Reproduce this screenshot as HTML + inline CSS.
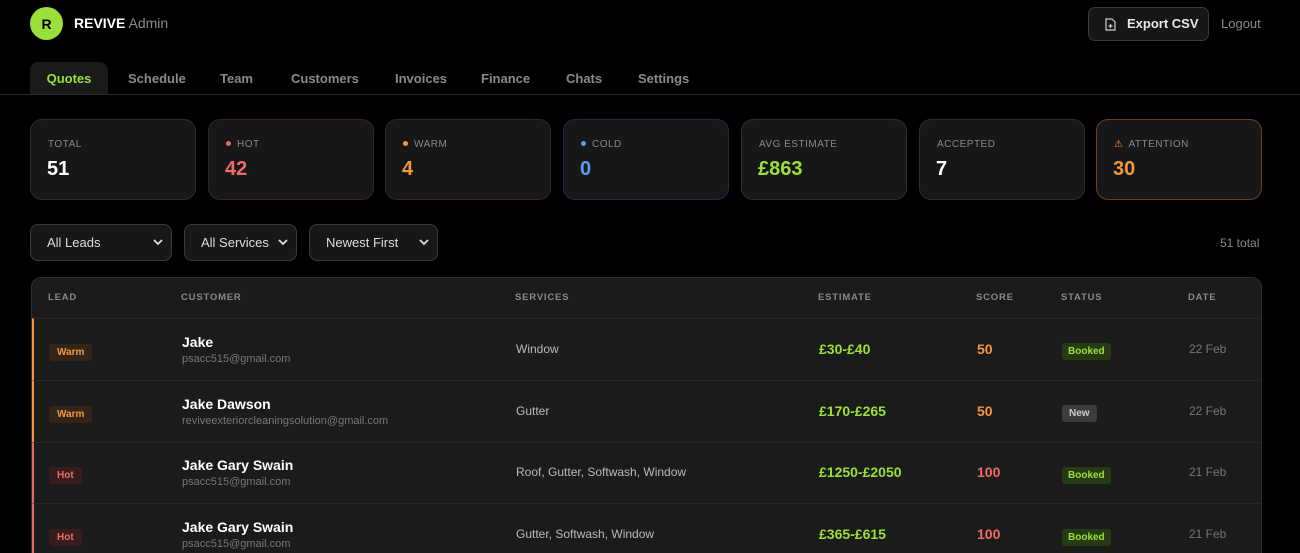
<!DOCTYPE html><html><head><style>
*{box-sizing:border-box;margin:0;padding:0}
html,body{width:1300px;height:553px;overflow:hidden}
body{background:#000;font-family:"Liberation Sans",sans-serif;color:#fff;position:relative}
.abs{position:absolute}
.logo{left:30px;top:7px;width:33px;height:33px;border-radius:50%;background:#9be03a;color:#000;font-weight:bold;font-size:14px;display:flex;align-items:center;justify-content:center}
.tab{top:62px;height:33px;font-size:13px;font-weight:bold;color:#8a8a8a;line-height:33px}
.card{top:119px;width:166px;height:81px;border-radius:12px;background:#171717;border:1px solid #2c2c2c}
.card .l{position:absolute;left:17px;top:19px;font-size:10px;letter-spacing:.5px;color:#8a8a8a}
.card .v{position:absolute;left:16px;top:38px;font-size:20px;font-weight:bold}
.dot{display:inline-block;width:5px;height:5px;border-radius:50%;margin-right:6px;vertical-align:1px}
.sel{top:224px;height:37px;border:1px solid #3a3a3a;border-radius:8px;background:#171717;font-size:13px;color:#ddd;line-height:35px;padding-left:16px}
.sel svg{position:absolute;right:8px;top:14px}
.tbl{left:31px;top:277px;width:1231px;height:320px;border:1px solid #2c2c2c;border-radius:10px;background:#1b1b1b;overflow:hidden}
.th{top:0;height:40px;line-height:40px;font-size:9.5px;font-weight:bold;letter-spacing:.8px;color:#8a8a8a}
.row{left:0;width:1231px;height:62px;border-top:1px solid #262626}
.row>div{position:absolute}
.b{font-size:10px;font-weight:bold;padding:3px 8px;border-radius:3px;display:inline-block}
</style></head><body>
<div class="abs logo">R</div>
<div class="abs" style="left:74px;top:15px;font-size:14px"><b>REVIVE</b> <span style="color:#8a8a8a">Admin</span></div>
<div class="abs" style="left:1088px;top:7px;width:121px;height:34px;border:1px solid #3a3a3a;border-radius:7px;background:#161616;font-size:13px;font-weight:bold;line-height:32px;padding-left:38px;color:#e8e8e8">Export CSV
<svg style="position:absolute;left:16px;top:10px" width="11" height="13" viewBox="0 0 11 13" fill="none" stroke="#ccc" stroke-width="1.2"><path d="M1 1h6l3 3v8H1z"/><path d="M5.5 6v4M3.5 8h4"/></svg></div>
<div class="abs" style="left:1221px;top:16px;font-size:13px;color:#8a8a8a">Logout</div>
<div class="abs tab" style="left:30px;width:78px;background:#1a1a1a;border-radius:8px 8px 0 0;color:#9be03a;text-align:center">Quotes</div>
<div class="abs tab" style="left:128px">Schedule</div>
<div class="abs tab" style="left:220px">Team</div>
<div class="abs tab" style="left:291px">Customers</div>
<div class="abs tab" style="left:395px">Invoices</div>
<div class="abs tab" style="left:481px">Finance</div>
<div class="abs tab" style="left:566px">Chats</div>
<div class="abs tab" style="left:638px">Settings</div>
<div class="abs" style="left:0;top:94px;width:1300px;height:1px;background:#2a2a2a"></div>

<div class="abs card" style="left:30px"><div class="l">TOTAL</div><div class="v">51</div></div>
<div class="abs card" style="left:208px;border-color:#3a2220"><div class="l"><span class="dot" style="background:#e06a6a"></span>HOT</div><div class="v" style="color:#f06a6a">42</div></div>
<div class="abs card" style="left:385px;border-color:#35251c"><div class="l"><span class="dot" style="background:#f59a3c"></span>WARM</div><div class="v" style="color:#f5963a">4</div></div>
<div class="abs card" style="left:563px;border-color:#1e2a48"><div class="l"><span class="dot" style="background:#5b9cf0"></span>COLD</div><div class="v" style="color:#5b9cf0">0</div></div>
<div class="abs card" style="left:741px"><div class="l">AVG ESTIMATE</div><div class="v" style="color:#9be03a">£863</div></div>
<div class="abs card" style="left:919px"><div class="l">ACCEPTED</div><div class="v">7</div></div>
<div class="abs card" style="left:1096px;border-color:#6a4020"><div class="l"><span style="color:#f5963a;margin-right:5px">⚠</span>ATTENTION</div><div class="v" style="color:#f5963a">30</div></div>

<div class="abs sel" style="left:30px;width:142px">All Leads<svg width="10" height="7" viewBox="0 0 10 7"><path d="M1 1l4 4 4-4" stroke="#ddd" stroke-width="1.8" fill="none"/></svg></div>
<div class="abs sel" style="left:184px;width:113px">All Services<svg width="10" height="7" viewBox="0 0 10 7"><path d="M1 1l4 4 4-4" stroke="#ddd" stroke-width="1.8" fill="none"/></svg></div>
<div class="abs sel" style="left:309px;width:129px">Newest First<svg width="10" height="7" viewBox="0 0 10 7"><path d="M1 1l4 4 4-4" stroke="#ddd" stroke-width="1.8" fill="none"/></svg></div>
<div class="abs" style="left:1220px;top:236px;font-size:12px;color:#8a8a8a">51 total</div>

<div class="abs tbl">
<div class="abs th" style="left:16px">LEAD</div>
<div class="abs th" style="left:149px">CUSTOMER</div>
<div class="abs th" style="left:483px">SERVICES</div>
<div class="abs th" style="left:786px">ESTIMATE</div>
<div class="abs th" style="left:944px">SCORE</div>
<div class="abs th" style="left:1029px">STATUS</div>
<div class="abs th" style="left:1156px">DATE</div>

<div class="abs row" style="top:40px;border-left:2px solid #f5963a">
<div style="left:15px;top:23px"><span class="b" style="background:#33241a;color:#f5963a">Warm</span></div>
<div style="left:148px;top:15px;font-size:14px;font-weight:bold">Jake</div>
<div style="left:148px;top:34px;font-size:11px;color:#777">psacc515@gmail.com</div>
<div style="left:482px;top:23px;font-size:12px;color:#bbb">Window</div>
<div style="left:785px;top:22px;font-size:14px;font-weight:bold;color:#9be03a">£30-£40</div>
<div style="left:943px;top:22px;font-size:14px;font-weight:bold;color:#f5963a">50</div>
<div style="left:1028px;top:22px"><span class="b" style="background:#263a14;color:#9be03a;padding:3px 6px">Booked</span></div>
<div style="left:1155px;top:23px;font-size:12px;color:#777">22 Feb</div>
</div>

<div class="abs row" style="top:102px;border-left:2px solid #f5963a">
<div style="left:15px;top:23px"><span class="b" style="background:#33241a;color:#f5963a">Warm</span></div>
<div style="left:148px;top:15px;font-size:14px;font-weight:bold">Jake Dawson</div>
<div style="left:148px;top:34px;font-size:11px;color:#777">reviveexteriorcleaningsolution@gmail.com</div>
<div style="left:482px;top:23px;font-size:12px;color:#bbb">Gutter</div>
<div style="left:785px;top:22px;font-size:14px;font-weight:bold;color:#9be03a">£170-£265</div>
<div style="left:943px;top:22px;font-size:14px;font-weight:bold;color:#f5963a">50</div>
<div style="left:1028px;top:22px"><span class="b" style="background:#3c3c3c;color:#ccc;padding:3px 7px">New</span></div>
<div style="left:1155px;top:23px;font-size:12px;color:#777">22 Feb</div>
</div>

<div class="abs row" style="top:164px;border-left:2px solid #e06a6a">
<div style="left:15px;top:22px"><span class="b" style="background:#361c1c;color:#f06a6a">Hot</span></div>
<div style="left:148px;top:14px;font-size:14px;font-weight:bold">Jake Gary Swain</div>
<div style="left:148px;top:33px;font-size:11px;color:#777">psacc515@gmail.com</div>
<div style="left:482px;top:22px;font-size:12px;color:#bbb">Roof, Gutter, Softwash, Window</div>
<div style="left:785px;top:21px;font-size:14px;font-weight:bold;color:#9be03a">£1250-£2050</div>
<div style="left:943px;top:21px;font-size:14px;font-weight:bold;color:#f06a6a">100</div>
<div style="left:1028px;top:22px"><span class="b" style="background:#263a14;color:#9be03a;padding:3px 6px">Booked</span></div>
<div style="left:1155px;top:22px;font-size:12px;color:#777">21 Feb</div>
</div>

<div class="abs row" style="top:225px;height:100px;border-left:2px solid #e06a6a">
<div style="left:15px;top:23px"><span class="b" style="background:#361c1c;color:#f06a6a">Hot</span></div>
<div style="left:148px;top:15px;font-size:14px;font-weight:bold">Jake Gary Swain</div>
<div style="left:148px;top:34px;font-size:11px;color:#777">psacc515@gmail.com</div>
<div style="left:482px;top:23px;font-size:12px;color:#bbb">Gutter, Softwash, Window</div>
<div style="left:785px;top:22px;font-size:14px;font-weight:bold;color:#9be03a">£365-£615</div>
<div style="left:943px;top:22px;font-size:14px;font-weight:bold;color:#f06a6a">100</div>
<div style="left:1028px;top:23px"><span class="b" style="background:#263a14;color:#9be03a;padding:3px 6px">Booked</span></div>
<div style="left:1155px;top:23px;font-size:12px;color:#777">21 Feb</div>
</div>
</div>
</body></html>
